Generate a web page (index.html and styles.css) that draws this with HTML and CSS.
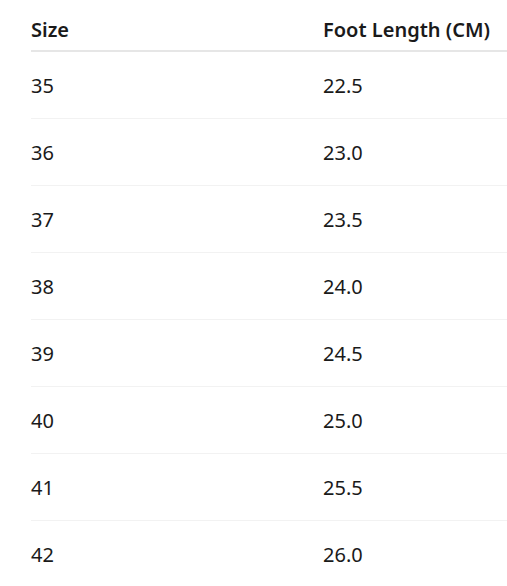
FILE: index.html
```html
<!DOCTYPE html>
<html lang="en">
<head>
<meta charset="utf-8">
<title>Size Chart</title>
<link rel="stylesheet" href="styles.css">
</head>
<body>
<section class="chart">
  <table class="size-table">
    <colgroup>
      <col class="col-size">
      <col class="col-length">
    </colgroup>
    <thead>
      <tr><th>Size</th><th>Foot Length (CM)</th></tr>
    </thead>
    <tbody>
      <tr><td>35</td><td>22.5</td></tr>
      <tr><td>36</td><td>23.0</td></tr>
      <tr><td>37</td><td>23.5</td></tr>
      <tr><td>38</td><td>24.0</td></tr>
      <tr><td>39</td><td>24.5</td></tr>
      <tr><td>40</td><td>25.0</td></tr>
      <tr><td>41</td><td>25.5</td></tr>
      <tr><td>42</td><td>26.0</td></tr>
    </tbody>
  </table>
</section>
</body>
</html>
```

FILE: styles.css
```css
html, body {
  margin: 0;
  background: #ffffff;
}
body {
  padding: 8px 0 0 31px;
  font-family: "Noto Sans", "Open Sans", sans-serif;
  color: #1a1a1a;
  overflow: hidden;
}
.size-table {
  width: 476px;
  table-layout: fixed;
  border-collapse: collapse;
  font-size: 20px;
}
.col-size {
  width: 292px;
}
.size-table th,
.size-table td {
  text-align: left;
  padding: 2px 0 0 0;
  line-height: 30px;
  white-space: nowrap;
}
.size-table th {
  font-weight: 600;
  height: 40px;
  border-bottom: 2px solid #e6e6e6;
  vertical-align: middle;
}
.size-table td {
  height: 64px;
  border-bottom: 1px solid #f2f2f2;
  vertical-align: middle;
  font-weight: 400;
}
```
